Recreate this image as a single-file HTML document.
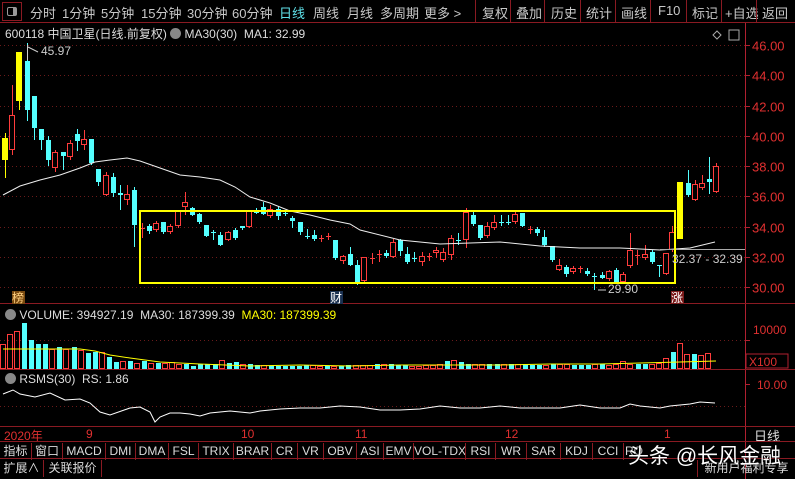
<!DOCTYPE html>
<html><head><meta charset="utf-8"><style>
*{margin:0;padding:0;box-sizing:border-box}
body{width:795px;height:479px;background:#000;overflow:hidden;font-family:"Liberation Sans","Noto Sans CJK SC",sans-serif;color:#ccc;position:relative}
.tb{position:absolute;left:0;top:0;width:795px;height:23px;border-bottom:1px solid #8a1a22}
.tb span{position:absolute;top:3px;font-size:13px;color:#c8c8c8}
.a{position:absolute;font-size:12px;white-space:nowrap}
.row{position:absolute;left:0;width:795px;border-top:1px solid #8a1a22;height:18px}
.row span{position:absolute;top:1px;font-size:12px;color:#ddd;border-right:1px solid #8a1a22;height:17px;line-height:16px;text-align:center;white-space:nowrap;overflow:hidden}
</style></head><body>
<div class="tb">
<div style="position:absolute;left:2px;top:2px;width:20px;height:19px;border:1px solid #8a1a22"></div>
<div style="position:absolute;left:7px;top:7px;width:10px;height:9px;border:1px solid #999;border-radius:2px;background:linear-gradient(90deg,#000 60%,#999 60%)"></div>
<span style="left:30px">分时</span><span style="left:62px">1分钟</span><span style="left:101px">5分钟</span><span style="left:141px">15分钟</span><span style="left:187px">30分钟</span><span style="left:232px">60分钟</span><span style="left:279px;color:#5fe0e8">日线</span><span style="left:313px">周线</span><span style="left:347px">月线</span><span style="left:380px">多周期</span><span style="left:424px">更多 &gt;</span>
<span style="left:482px">复权</span><span style="left:516px">叠加</span><span style="left:551px">历史</span><span style="left:586px">统计</span><span style="left:621px">画线</span><span style="left:658px">F10</span><span style="left:692px">标记</span><span style="left:725px">+自选</span><span style="left:762px">返回</span>
<div style="position:absolute;left:475px;top:0;width:1px;height:22px;background:#8a1a22"></div>
<div style="position:absolute;left:510px;top:0;width:1px;height:22px;background:#8a1a22"></div>
<div style="position:absolute;left:544px;top:0;width:1px;height:22px;background:#8a1a22"></div>
<div style="position:absolute;left:580px;top:0;width:1px;height:22px;background:#8a1a22"></div>
<div style="position:absolute;left:615px;top:0;width:1px;height:22px;background:#8a1a22"></div>
<div style="position:absolute;left:650px;top:0;width:1px;height:22px;background:#8a1a22"></div>
<div style="position:absolute;left:686px;top:0;width:1px;height:22px;background:#8a1a22"></div>
<div style="position:absolute;left:721px;top:0;width:1px;height:22px;background:#8a1a22"></div>
<div style="position:absolute;left:756px;top:0;width:1px;height:22px;background:#8a1a22"></div>
</div>
<div class="a" style="left:5px;top:25px;color:#ddd">600118 中国卫星(日线.前复权) <span style="display:inline-block;width:11px;height:11px;border-radius:50%;background:#888;vertical-align:-1px"></span> MA30(30)&nbsp; MA1: 32.99</div>
<svg id="s" width="795" height="479" style="position:absolute;left:0;top:0"></svg>
<div class="a" style="left:5px;top:308px;color:#ddd"><span style="display:inline-block;width:11px;height:11px;border-radius:50%;background:#888;vertical-align:-1px"></span> VOLUME: 394927.19&nbsp; MA30: 187399.39&nbsp; <span style="color:#ff0">MA30: 187399.39</span></div>
<div class="a" style="left:5px;top:372px;color:#ddd"><span style="display:inline-block;width:11px;height:11px;border-radius:50%;background:#888;vertical-align:-1px"></span> RSMS(30)&nbsp; RS: 1.86</div>
<div style="position:absolute;left:0;top:426px;width:795px;height:15px;border-top:1px solid #8a1a22"></div>
<div class="a" style="left:4px;top:427px;color:#e03030">2020年</div>
<div class="a" style="left:86px;top:427px;color:#e03030">9</div>
<div class="a" style="left:241px;top:427px;color:#e03030">10</div>
<div class="a" style="left:355px;top:427px;color:#e03030">11</div>
<div class="a" style="left:505px;top:427px;color:#e03030">12</div>
<div class="a" style="left:664px;top:427px;color:#e03030">1</div>
<div class="a" style="left:754px;top:426px;color:#ddd;font-size:13px">日线</div>
<div class="row" style="top:441px">
<span style="left:0;width:32px">指标</span><span style="left:32px;width:31px">窗口</span><span style="left:63px;width:43px">MACD</span><span style="left:106px;width:30px">DMI</span><span style="left:136px;width:33px">DMA</span><span style="left:169px;width:30px">FSL</span><span style="left:199px;width:35px">TRIX</span><span style="left:234px;width:38px">BRAR</span><span style="left:272px;width:26px">CR</span><span style="left:298px;width:26px">VR</span><span style="left:324px;width:33px">OBV</span><span style="left:357px;width:27px">ASI</span><span style="left:384px;width:30px">EMV</span><span style="left:414px;width:52px">VOL-TDX</span><span style="left:466px;width:30px">RSI</span><span style="left:496px;width:31px">WR</span><span style="left:527px;width:34px">SAR</span><span style="left:561px;width:32px">KDJ</span><span style="left:593px;width:31px">CCI</span><span style="left:624px;border:none;width:20px">RO</span>
</div>
<div class="row" style="top:458px;height:21px">
<span style="left:0;width:44px">扩展∧</span><span style="left:44px;width:58px">关联报价</span>
<span style="left:697px;border-left:1px solid #8a1a22;border-right:none;width:98px">新用户福利专享</span>
</div>
<div class="a" style="left:628px;top:440px;font-size:21px;color:#fff;text-shadow:0 0 2px #000">头条 @长风金融</div>
<script>
var s=document.getElementById('s'),h='';
function L(x1,y1,x2,y2,c,d){h+='<line x1="'+x1+'" y1="'+y1+'" x2="'+x2+'" y2="'+y2+'" stroke="'+c+'"'+(d?' stroke-dasharray="'+d+'"':'')+'/>';}
function R(x,y,w,hh,f,st){h+='<rect x="'+x+'" y="'+y+'" width="'+w+'" height="'+hh+'" fill="'+f+'"'+(st?' stroke="'+st+'"':'')+'/>';}
function T(x,y,t,c,sz){h+='<text x="'+x+'" y="'+y+'" fill="'+c+'" font-size="'+(sz||12)+'" font-family="Liberation Sans,Noto Sans CJK SC,sans-serif">'+t+'</text>';}
L(745.5,23,745.5,479,'#b02030');
L(0,303.5,795,303.5,'#8a1a22');L(0,369.5,795,369.5,'#8a1a22');
var prices=[46,44,42,40,38,36,34,32,30];
prices.forEach(function(p){var y=Math.round(45+(46-p)*15.14)+.5;L(0,y,745,y,'#6a1a1a','1,3');L(745,y,750,y,'#b02030');T(752,y+5,p.toFixed(2),'#e03030',13);});
L(0,340.5,745,340.5,'#6a1a1a','1,3');L(745,340.5,750,340.5,'#b02030');T(753,334,'10000','#e03030',12);
R(746,354,42,14,'none','#b02030');T(749,366,'X100','#e03030',12);
L(0,406.5,745,406.5,'#6a1a1a','1,3');L(745,384.5,750,384.5,'#b02030');T(757,389,'10.00','#e03030',12);
var C=[[5,138,160,133,178,'y'],[12,115,150,85,155,'r'],[19,52,101,52,110,'y'],[27,61,110,43,121,'c'],[34,96,128,96,140,'c'],[41,129,140,129,150,'c'],[48,140,160,136,166,'c'],[55,152,168,150,172,'r'],[63,152,156,152,170,'c'],[70,143,157,140,160,'r'],[77,134,141,129,151,'c'],[84,139,145,130,150,'r'],[91,139,163,139,165,'c'],[98,169,182,169,186,'c'],[106,175,195,172,196,'r'],[113,177,193,173,197,'c'],[120,193,195,185,210,'c'],[127,194,200,185,205,'r'],[134,190,225,187,247,'c'],
[142,228,229,223,238,'r'],[149,226,231,224,234,'c'],[156,223,230,221,232,'r'],[163,222,232,222,234,'c'],[170,226,232,224,234,'r'],[178,210,226,210,228,'r'],[185,202,207,192,215,'r'],[192,208,215,207,216,'c'],[199,214,222,213,224,'c'],[206,225,236,225,237,'c'],[213,232,233,230,240,'c'],[220,235,245,232,246,'c'],[228,232,240,231,241,'r'],[235,230,238,228,240,'c'],[242,226,228,226,230,'c'],[249,211,227,210,228,'r'],[256,212,213,208,214,'c'],[263,207,214,202,215,'c'],[270,209,216,205,218,'r'],[278,209,216,206,220,'c'],[285,213,214,210,216,'c'],[292,218,221,216,228,'c'],[300,222,232,222,235,'c'],[307,236,237,229,239,'c'],[314,235,239,230,241,'c'],[321,238,239,235,242,'r'],[328,236,237,233,240,'r'],[335,240,258,240,260,'c'],[343,256,261,255,264,'r'],[350,254,265,247,266,'c'],[357,265,283,260,285,'c'],
[364,257,281,257,282,'r'],[372,258,259,253,264,'r'],[379,254,255,250,262,'r'],[386,253,256,250,258,'c'],[393,242,257,239,258,'r'],[400,240,251,239,256,'c'],[407,254,262,247,264,'c'],[414,258,259,252,262,'c'],[422,256,262,252,266,'r'],[429,256,257,253,261,'r'],[436,250,253,247,258,'r'],[443,252,260,248,262,'r'],[451,238,255,235,260,'r'],[458,240,241,233,245,'c'],[466,212,240,208,248,'r'],[473,215,224,212,226,'c'],[480,225,238,225,240,'c'],[487,226,236,222,238,'r'],[494,222,228,215,230,'r'],[501,222,223,215,226,'c'],[508,222,223,215,225,'c'],[515,214,222,212,224,'r'],[522,213,226,213,227,'c'],[530,229,230,226,234,'r'],[537,229,233,227,236,'c'],[544,237,245,230,247,'c'],[552,246,260,246,262,'c'],[559,265,270,259,271,'r'],[566,267,274,265,277,'c'],[573,268,272,266,274,'r'],[580,268,269,266,273,'r'],[587,271,274,268,276,'c'],[594,276,277,273,290,'c'],[602,275,278,272,279,'c'],[609,271,279,270,281,'r'],[616,270,282,268,284,'c'],[623,274,282,272,283,'r'],[630,250,266,233,268,'r'],[637,255,256,250,265,'r'],[645,254,258,245,260,'r'],[652,252,262,250,264,'c'],[659,265,266,265,277,'c'],[666,253,274,253,275,'r'],[672,232,250,226,252,'r'],[680,182,239,182,239,'y'],[688,183,195,170,197,'c'],[695,184,200,180,201,'r'],[702,183,188,175,190,'r'],[709,179,182,157,194,'c'],[716,166,192,163,193,'r']];
var col={r:'#ff3c3c',c:'#54ffff',y:'#ffff00'};
C.forEach(function(c){var x=c[0],cl=col[c[5]];L(x+.5,c[3],x+.5,c[4],cl);var hh=Math.max(1,c[2]-c[1]);if(c[5]=='r'&&hh>1)R(x-2.5,c[1]+.5,5,hh-1,'#000',cl);else R(x-2-(c[5]=='y'?1:0),c[1],c[5]=='y'?6:5,hh,cl);});
h+='<polyline fill="none" stroke="#eee" stroke-width="1" points="3,195 20,186 40,180 60,175 80,168 95,162 110,160 127,158 140,161 160,168 180,175 200,177 220,180 235,187 250,197 270,203 290,211 310,215 330,220 350,224 360,230 400,240 440,244 500,242 540,246 580,248 620,248 660,250 690,248 715,242"/>';
L(660,249.5,745,249.5,'#aaa');
h+='<rect x="140" y="211" width="535" height="72" fill="none" stroke="#ffff00" stroke-width="2"/>';
T(41,55,'45.97','#ccc',12);L(27.5,45,27.5,60,'#ccc');L(28,47,38,52,'#ccc');
T(608,293,'29.90','#ccc',12);L(598,290,606,290,'#ccc');
T(672,263,'32.37 - 32.39','#ccc',12);
R(12,291,13,13,'#7a4a10');T(12,302,'榜','#ffd080',12);
R(330,291,13,13,'#1a3050');T(330,302,'财','#fff',12);
R(671,291,13,13,'#7a1a1a');T(671,302,'涨','#fff',12);
h+='<path d="M713 35 L717 31 L721 35 L717 39 Z" fill="none" stroke="#aaa"/>';R(729,30,10,10,'none','#aaa');
var V=[25,35,38,46,29,25,25,20,22,20,22,19,16,17,17,12,7,8,8,6,8,6,6,6,7,5,5,3,5,5,5,9,6,7,5,5,4,4,3,3,3,3,3,4,4,3,3,3,3,4,4,4,4,5,5,5,4,4,3,3,4,4,5,8,9,7,5,5,5,5,5,5,5,5,5,4,4,4,5,5,5,4,4,4,5,5,4,5,8,5,5,5,5,6,11,17,26,15,15,14,16];
for(var i=0;i<V.length;i++){var c=C[Math.min(i,C.length-1)],x=Math.round(3+i*7.05);var cl=c[5]=='c'?'#54ffff':'#ff3c3c';var hh=V[i];if(cl=='#54ffff')R(x-2,369-hh,5,hh,cl);else R(x-2.5,369-hh+.5,5,hh-1,'none',cl);}
h+='<polyline fill="none" stroke="#ffff00" points="3,349 80,349 95,351 110,355 130,358 160,362 200,364 250,366 300,365 350,366 400,365 450,365 500,365 550,364 600,364 640,363 680,362 716,361"/>';
h+='<polyline fill="none" stroke="#fff" points="3,394 13,390 20,394 35,397 50,393 65,400 80,399 90,403 100,412 110,415 130,408 140,407 150,412 155,422 160,417 170,413 180,413 190,414 200,416 210,413 230,411 250,413 260,411 280,409 300,408 320,408 340,406 360,407 380,410 400,410 420,409 440,406 460,408 480,408 500,406 520,408 540,408 560,408 580,405 600,408 620,408 630,404 640,406 660,408 670,406 690,404 700,402 715,403"/>';
s.innerHTML=h;
</script>
</body></html>
